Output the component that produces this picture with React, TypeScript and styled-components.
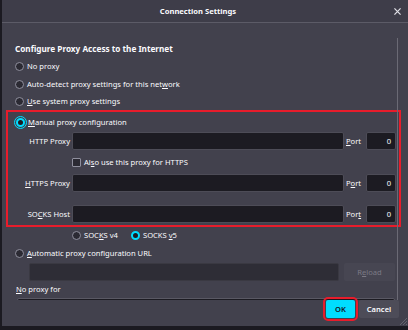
import styled, { createGlobalStyle, css } from "styled-components";

const GlobalStyle = createGlobalStyle`
  html, body {
    margin: 0;
    padding: 0;
    background: #15141a;
  }
  body {
    font-family: "Noto Sans", "Open Sans", Arial, sans-serif;
    font-size: 7.6px;
    color: #fbfbfe;
  }
`;

const Dialog = styled.div`
  position: relative;
  width: 406px;
  height: 326px;
  border-left: 2px solid #1b1a21;
  border-bottom: 4px solid #1b1a21;
  background: #42414d;
  display: flex;
  flex-direction: column;
  overflow: hidden;
`;

const TitleBar = styled.div`
  height: 22px;
  flex: 0 0 auto;
  display: flex;
  align-items: center;
  justify-content: center;
  position: relative;
  padding-right: 14px;
  background: #3e3d49;
  border-bottom: 1px solid #5c5b67;
  font-weight: 700;
  font-size: 7.6px;
`;

const CloseX = styled.svg`
  position: absolute;
  right: 7px;
  top: 8px;
  width: 7px;
  height: 7px;
  stroke: #e0e0e6;
  stroke-width: 1.4;
  fill: none;
`;

const Content = styled.div`
  flex: 1;
  min-height: 0;
  overflow: hidden;
  position: relative;
  padding: 18px 12px 0 12px;
  display: flex;
  flex-direction: column;

  & > * {
    flex-shrink: 0;
  }
`;

const ScrollTrack = styled.div`
  position: absolute;
  right: 10px;
  top: 15px;
  bottom: 0;
  width: 1px;
  background: #6b6a75;
`;

const Heading = styled.div`
  font-size: 8.2px;
  font-weight: 700;
  margin-left: 1px;
  height: 16px;
  line-height: 16px;
`;

const OptionRow = styled.label<{ $indent?: number; $h?: number }>`
  display: flex;
  align-items: center;
  gap: 3px;
  height: ${({ $h }) => $h ?? 18}px;
  padding-left: ${({ $indent }) => $indent ?? 1}px;
  white-space: nowrap;
  flex-shrink: 0;
`;

const Radio = styled.span<{ $checked?: boolean; $focus?: boolean }>`
  position: relative;
  width: 9px;
  height: 9px;
  box-sizing: border-box;
  border-radius: 50%;
  border: 1px solid #8f8f9d;
  background: #2b2a33;
  flex: 0 0 auto;
  ${({ $checked }) =>
    $checked &&
    css`
      border: 2.5px solid #00ddff;
      background: #1c1b22;
    `}
  ${({ $focus }) =>
    $focus &&
    css`
      outline: 1.5px solid #00ddff;
      outline-offset: 1px;
    `}
`;

const Checkbox = styled.span`
  width: 9px;
  height: 9px;
  box-sizing: border-box;
  border: 1px solid #8f8f9d;
  border-radius: 1px;
  background: #2b2a33;
  flex: 0 0 auto;
`;

const U = styled.span`
  text-decoration: underline;
  text-underline-offset: 1px;
`;

const Highlight = styled.div`
  margin: 1px -5px 0 -8px;
  border: 2px solid #e81c2b;
  padding: 0 3px 2px 7px;
  display: flex;
  flex-direction: column;
`;

const FieldRow = styled.div<{ $mt?: number }>`
  display: grid;
  grid-template-columns: 55px 1fr 18px 30px;
  align-items: center;
  column-gap: 2px;
  height: 18px;
  margin-top: ${({ $mt }) => $mt ?? 0}px;
`;

const FieldLabel = styled.span`
  text-align: right;
  white-space: nowrap;
`;

const TextBox = styled.div<{ $disabled?: boolean }>`
  height: 18px;
  box-sizing: border-box;
  border: 1px solid ${({ $disabled }) => ($disabled ? "#3a3942" : "#4d4c57")};
  border-radius: 2px;
  background: ${({ $disabled }) => ($disabled ? "#2e2d36" : "#1c1b22")};
  display: flex;
  align-items: center;
  justify-content: flex-end;
  padding-right: 4px;
`;

const PortLabel = styled.span`
  text-align: left;
`;

const UrlRow = styled.div`
  display: flex;
  gap: 5px;
  height: 18px;
  margin-left: 15px;
  margin-right: 1px;
`;

const ReloadButton = styled.div`
  width: 51px;
  height: 18px;
  border-radius: 2px;
  background: #474652;
  color: #7b7a85;
  display: flex;
  align-items: center;
  justify-content: center;
`;

const NoProxyLabel = styled.div`
  margin: 2px 0 0 2px;
  height: 13px;
  line-height: 13px;
`;

const TextArea = styled.div`
  margin: 2px 1px 0 3px;
  height: 20px;
  border: 1px solid #5a5964;
  border-radius: 2px;
  background: #1c1b22;
`;

const Footer = styled.div`
  flex: 0 0 auto;
  height: 26px;
  display: flex;
  justify-content: flex-end;
  align-items: flex-start;
  gap: 4px;
  padding-right: 9px;
  position: relative;
`;

const Button = styled.div<{ $primary?: boolean; $w: number }>`
  height: 18px;
  width: ${({ $w }) => $w}px;
  box-sizing: border-box;
  border-radius: 2px;
  display: flex;
  align-items: center;
  justify-content: center;
  font-weight: 600;
  background: ${({ $primary }) => ($primary ? "#00ddff" : "#4d4c58")};
  color: ${({ $primary }) => ($primary ? "#15141a" : "#fbfbfe")};
  ${({ $primary }) =>
    $primary &&
    css`
      outline: 2px solid #e81c2b;
      outline-offset: 1px;
    `}
`;

const Grip = styled.svg`
  position: absolute;
  right: 1px;
  bottom: 1px;
  width: 8px;
  height: 8px;
  stroke: #6e6d78;
  stroke-width: 0.8;
`;

const fields = [
  { label: <>HTTP Proxy</>, port: <><U>P</U>ort</> },
  { label: <><U>H</U>TTPS Proxy</>, port: <>P<U>o</U>rt</> },
  { label: <>SO<U>C</U>KS Host</>, port: <>Por<U>t</U></> },
];

export default function App() {
  return (
    <>
      <GlobalStyle />
      <Dialog>
        <TitleBar>
          Connection Settings
          <CloseX viewBox="0 0 8 8">
            <path d="M0.5 0.5l7 7M7.5 0.5l-7 7" />
          </CloseX>
        </TitleBar>
        <Content>
          <ScrollTrack />
          <Heading>Configure Proxy Access to the Internet</Heading>
          <OptionRow>
            <Radio />
            No proxy
          </OptionRow>
          <OptionRow>
            <Radio />
            <span>
              Auto-detect proxy settings for this net<U>w</U>ork
            </span>
          </OptionRow>
          <OptionRow $h={16}>
            <Radio />
            <span>
              <U>U</U>se system proxy settings
            </span>
          </OptionRow>
          <Highlight>
            <OptionRow $h={20}>
              <Radio $checked $focus />
              <span>
                <U>M</U>anual proxy configuration
              </span>
            </OptionRow>
            <FieldRow>
              <FieldLabel>{fields[0].label}</FieldLabel>
              <TextBox />
              <PortLabel>{fields[0].port}</PortLabel>
              <TextBox>0</TextBox>
            </FieldRow>
            <OptionRow $indent={57} $h={24}>
              <Checkbox />
              <span>
                Al<U>s</U>o use this proxy for HTTPS
              </span>
            </OptionRow>
            <FieldRow>
              <FieldLabel>{fields[1].label}</FieldLabel>
              <TextBox />
              <PortLabel>{fields[1].port}</PortLabel>
              <TextBox>0</TextBox>
            </FieldRow>
            <FieldRow $mt={13}>
              <FieldLabel>{fields[2].label}</FieldLabel>
              <TextBox />
              <PortLabel>{fields[2].port}</PortLabel>
              <TextBox>0</TextBox>
            </FieldRow>
          </Highlight>
          <OptionRow $indent={58} $h={16}>
            <Radio />
            <span style={{ marginRight: 10 }}>
              SOC<U>K</U>S v4
            </span>
            <Radio $checked />
            <span>
              SOCKS <U>v</U>5
            </span>
          </OptionRow>
          <OptionRow $h={20}>
            <Radio />
            <span>
              <U>A</U>utomatic proxy configuration URL
            </span>
          </OptionRow>
          <UrlRow>
            <TextBox $disabled style={{ flex: 1 }} />
            <ReloadButton>
              R<U>e</U>load
            </ReloadButton>
          </UrlRow>
          <NoProxyLabel>
            <U>N</U>o proxy for
          </NoProxyLabel>
          <TextArea />
        </Content>
        <Footer>
          <Button $primary $w={29}>
            OK
          </Button>
          <Button $w={40}>Cancel</Button>
          <Grip viewBox="0 0 8 8">
            <path d="M8 1L1 8M8 4L4 8M8 7L7 8" />
          </Grip>
        </Footer>
      </Dialog>
    </>
  );
}
